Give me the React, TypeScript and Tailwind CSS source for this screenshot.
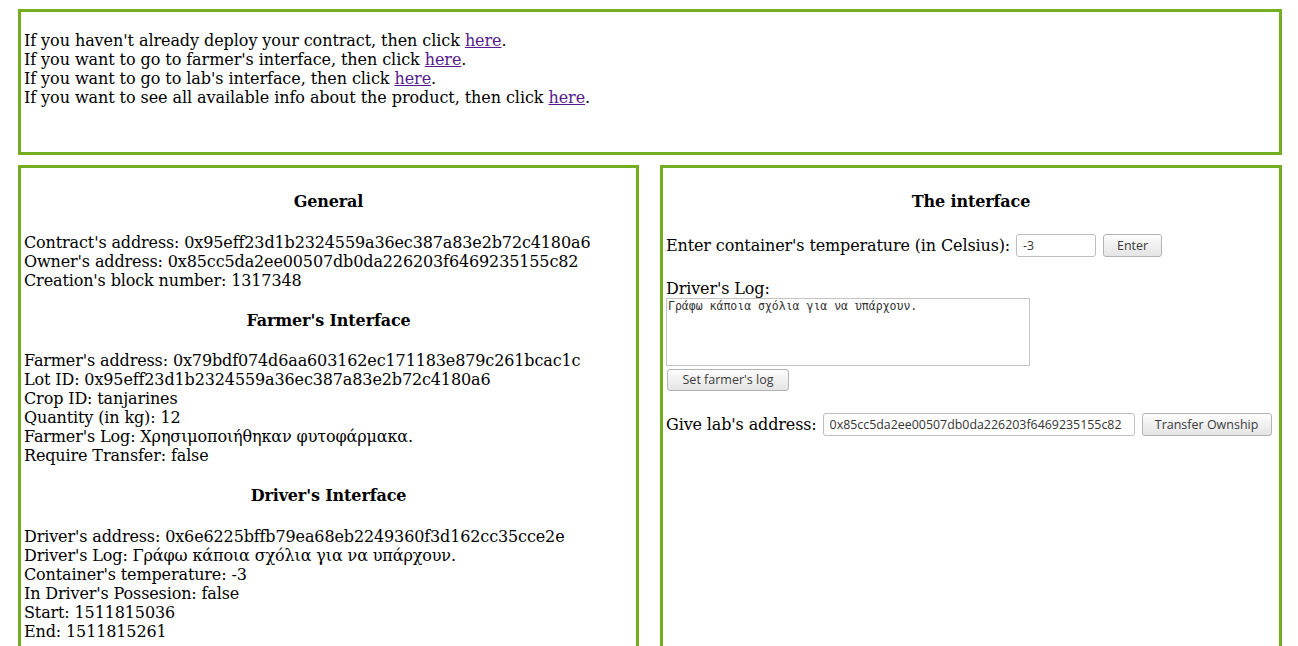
import React from 'react';

const serif = { fontFamily: '"DejaVu Serif", serif' };

function Line({ children }: { children: React.ReactNode }) {
  return <div className="leading-[19px]">{children}</div>;
}

function Here() {
  return (
    <a href="#" className="text-[#551a8b] underline">
      here
    </a>
  );
}

function Heading({ children }: { children: React.ReactNode }) {
  return <h4 className="my-[21.3px] text-center font-bold leading-[19px]">{children}</h4>;
}

const btn =
  "h-[22px] rounded-[3px] border border-[#b3b3b3] bg-gradient-to-b from-[#fdfdfd] to-[#e4e4e4] text-[12.5px] text-[#3c3c3c] font-['Open_Sans',sans-serif] leading-none tracking-normal";

const field =
  "h-[23px] rounded-[3px] border border-[#bdbdbd] bg-white px-[6px] text-[12.4px] text-[#333] font-['Open_Sans',sans-serif] outline-none tracking-normal";

export default function App() {
  return (
    <div className="min-h-screen bg-white text-black text-[16px] tracking-[-0.13px] pl-[18px] pt-[9px]" style={serif}>
      {/* links box */}
      <div className="w-[1264px] h-[146px] border-[3px] border-[#73ad21] px-[3px] pt-[19px] tracking-[-0.07px]">
        <Line>If you haven't already deploy your contract, then click <Here />.</Line>
        <Line>If you want to go to farmer's interface, then click <Here />.</Line>
        <Line>If you want to go to lab's interface, then click <Here />.</Line>
        <Line>If you want to see all available info about the product, then click <Here />.</Line>
      </div>

      <div className="flex gap-[21px] mt-[10px] w-[1264px]">
        {/* info panel */}
        <div className="w-[621px] border-[3px] border-[#73ad21] px-[3px] pt-[3px] pb-[8px]">
          <Heading>General</Heading>
          <Line>Contract's address: 0x95eff23d1b2324559a36ec387a83e2b72c4180a6</Line>
          <Line>Owner's address: 0x85cc5da2ee00507db0da226203f6469235155c82</Line>
          <Line>Creation's block number: 1317348</Line>
          <Heading>Farmer's Interface</Heading>
          <Line>Farmer's address: 0x79bdf074d6aa603162ec171183e879c261bcac1c</Line>
          <Line>Lot ID: 0x95eff23d1b2324559a36ec387a83e2b72c4180a6</Line>
          <Line>Crop ID: tanjarines</Line>
          <Line>Quantity (in kg): 12</Line>
          <Line>Farmer's Log: Χρησιμοποιήθηκαν φυτοφάρμακα.</Line>
          <Line>Require Transfer: false</Line>
          <Heading>Driver's Interface</Heading>
          <Line>Driver's address: 0x6e6225bffb79ea68eb2249360f3d162cc35cce2e</Line>
          <Line>Driver's Log: Γράφω κάποια σχόλια για να υπάρχουν.</Line>
          <Line>Container's temperature: -3</Line>
          <Line>In Driver's Possesion: false</Line>
          <Line>Start: 1511815036</Line>
          <Line>End: 1511815261</Line>
        </div>

        {/* driver interface */}
        <div className="w-[622px] border-[3px] border-[#73ad21] px-[3px] pt-[3px]">
          <h4 className="mt-[21.3px] mb-[23px] text-center font-bold leading-[19px]">The interface</h4>
          <div className="flex items-center h-[23px]">
            <span className="leading-[19px]">Enter container's temperature (in Celsius):</span>
            <input className={`${field} ml-[6px] w-[80px]`} defaultValue="-3" />
            <button className={`${btn} ml-[7px] w-[59px] h-[23px]`}>Enter</button>
          </div>
          <div className="mt-[22px] leading-[19px]">Driver's Log:</div>
          <textarea
            className="block w-[364px] h-[68px] border border-[#c4c4c4] bg-white px-[1px] py-[1px] text-[11.5px] leading-[13px] text-[#333] tracking-normal resize-none outline-none"
            style={{ fontFamily: '"DejaVu Sans Mono", monospace' }}
            defaultValue="Γράφω κάποια σχόλια για να υπάρχουν."
          />
          <button className={`${btn} block mt-[3px] ml-[1px] w-[122px]`}>Set farmer's log</button>
          <div className="flex items-center h-[23px] mt-[22px]">
            <span className="leading-[19px]">Give lab's address:</span>
            <input
              className={`${field} ml-[6px] w-[312px] px-[5px]`}
              defaultValue="0x85cc5da2ee00507db0da226203f6469235155c82"
            />
            <button className={`${btn} ml-[7px] w-[130px] h-[23px]`}>Transfer Ownship</button>
          </div>
        </div>
      </div>
    </div>
  );
}
